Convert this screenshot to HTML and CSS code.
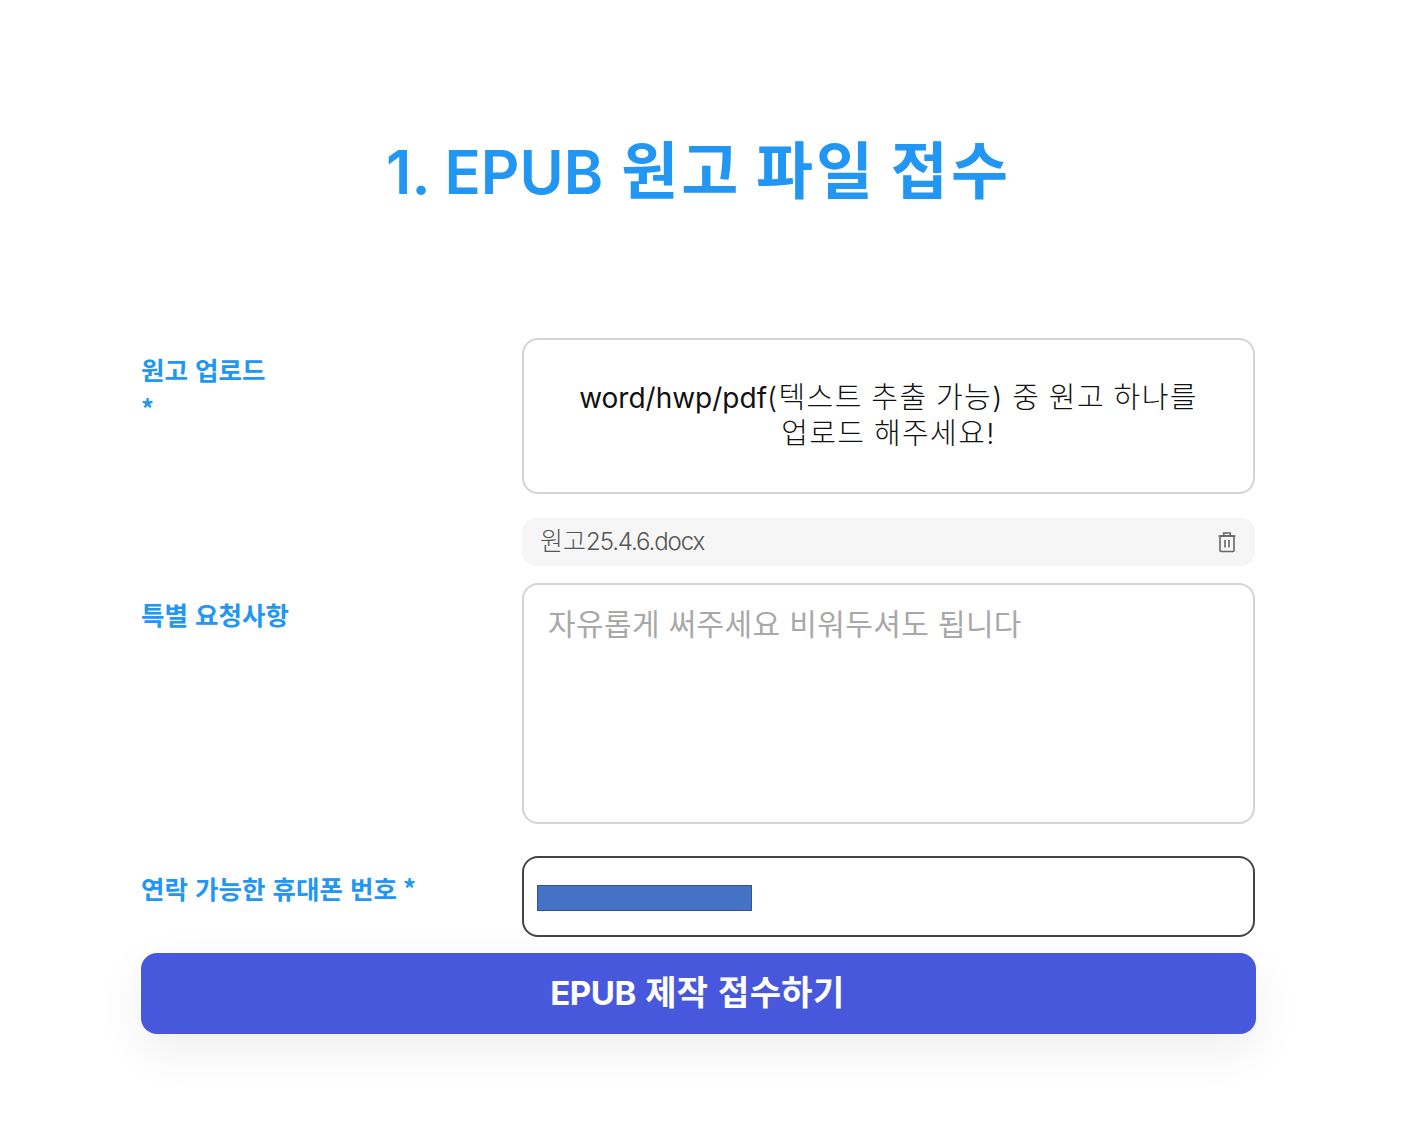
FILE: index.html
```html
<!DOCTYPE html>
<html lang="ko">

<head>
    <meta charset="UTF-8">
    <meta name="viewport" content="width=device-width, initial-scale=1.0">
    <title>EPUB 원고 파일 접수</title>
    <link rel="stylesheet" href="styles.css">
</head>

<body>
    <main class="page">
        <h1 class="page__title">1. EPUB <span class="page__title-ko">원고 파일 접수</span></h1>

        <form class="order-form">
            <div class="order-form__row order-form__row--upload">
                <label class="order-form__label">원고 업로드<span class="order-form__star order-form__star--block">*</span></label>
                <div class="order-form__field">
                    <div class="upload-box">word/hwp/pdf<span class="upload-box__ko">(텍스트 추출 가능) 중 원고 하나를<br>업로드 해주세요!</span></div>
                    <div class="file-item">
                        <span class="file-item__name"><span class="file-item__ko">원고</span>25.4.6.docx</span>
                        <svg class="file-item__icon" viewBox="0 0 20 22" fill="none" stroke="currentColor" stroke-width="1.6">
                            <path d="M1.5 5h17" />
                            <path d="M6.8 5V2h6.4v3" />
                            <rect x="3" y="5" width="14" height="15.5" rx="1.2" />
                            <path d="M8 9v7.5M12 9v7.5" />
                        </svg>
                    </div>
                </div>
            </div>

            <div class="order-form__row order-form__row--request">
                <label class="order-form__label">특별 요청사항</label>
                <div class="order-form__field">
                    <textarea class="order-form__textarea" placeholder="자유롭게 써주세요 비워두셔도 됩니다"></textarea>
                </div>
            </div>

            <div class="order-form__row order-form__row--phone">
                <label class="order-form__label">연락 가능한 휴대폰 번호<span class="order-form__star">*</span></label>
                <div class="order-form__field">
                    <div class="phone-input">
                        <span class="phone-input__mask"></span>
                    </div>
                </div>
            </div>

            <button class="order-form__submit" type="button"><span class="order-form__submit-en">EPUB</span> 제작 접수하기</button>
        </form>
    </main>
</body>

</html>
```

FILE: styles.css
```css
* {
    box-sizing: border-box;
}

body {
    margin: 0;
    background: #fff;
    font-family: "Noto Sans CJK KR", Inter, sans-serif;
}

.page {
    padding: 130px 160px 91px 141px;
    width: 1416px;
}

.page__title {
    margin: 0 0 124px;
    height: 84px;
    font-family: Inter, "Noto Sans CJK KR", sans-serif;
    font-size: 60px;
    line-height: 84px;
    font-weight: 600;
    text-align: center;
    color: #2196f3;
}

.page__title-ko {
    margin-left: 3px;
    font-size: 62px;
    font-weight: 700;
    letter-spacing: 3px;
    word-spacing: -3px;
}

/* form */
.order-form {
    width: 1115px;
}

.order-form__row {
    display: grid;
    grid-template-columns: 381px 733px;
}

.order-form__row--request {
    margin-top: 17px;
}

.order-form__row--phone {
    margin-top: 32px;
}

.order-form__label {
    padding-top: 13px;
    font-size: 25.5px;
    line-height: 36px;
    font-weight: 700;
    color: #2196f3;
}

.order-form__row--phone .order-form__label {
    padding-top: 14px;
}

.order-form__row--phone .order-form__star {
    margin-left: 6px;
}

.order-form__star--block {
    display: block;
    margin-top: 3px;
}

/* upload */
.upload-box {
    height: 156px;
    padding: 40px 20px 0;
    border: 2px solid #d4d4d4;
    border-radius: 16px;
    font-family: Inter, "Noto Sans CJK KR", sans-serif;
    font-size: 28px;
    line-height: 36px;
    text-align: center;
    color: #111;
}

.upload-box__ko {
    font-size: 29px;
    font-weight: 300;
    letter-spacing: 1.4px;
    word-spacing: -1px;
}

.file-item {
    display: flex;
    align-items: center;
    justify-content: space-between;
    height: 48px;
    margin-top: 24px;
    padding: 0 18px;
    border-radius: 14px;
    background: #f6f6f6;
}

.file-item__name {
    margin-top: -6px;
    font-family: Inter, "Noto Sans CJK KR", sans-serif;
    font-size: 24px;
    font-weight: 300;
    letter-spacing: -1.1px;
    color: #555;
}

.file-item__ko {
    font-size: 25px;
    letter-spacing: 0;
}

.file-item__icon {
    width: 20px;
    height: 22px;
    color: #666;
}

.order-form__textarea {
    display: block;
    width: 100%;
    height: 241px;
    padding: 17px 24px;
    border: 2px solid #d4d4d4;
    border-radius: 16px;
    font-family: "Noto Sans CJK KR", sans-serif;
    font-size: 30px;
    line-height: 40px;
    letter-spacing: 0.37px;
    resize: none;
    outline: none;
}

.order-form__textarea::placeholder {
    color: #a8a8a8;
}

/* phone */
.phone-input {
    display: flex;
    align-items: center;
    height: 81px;
    padding: 2px 13px 0;
    border: 2px solid #444;
    border-radius: 16px;
}

.phone-input__mask {
    width: 215px;
    height: 26px;
    border: 1px solid #2f5597;
    background: #4472c4;
}

.order-form__submit {
    display: block;
    width: 100%;
    height: 81px;
    margin-top: 16px;
    padding: 0 2px 7px 0;
    border: 0;
    border-radius: 16px;
    background: #4858dc;
    box-shadow: 0 16px 48px rgba(0, 0, 0, 0.07);
    font-family: Inter, "Noto Sans CJK KR", sans-serif;
    font-size: 34px;
    font-weight: 700;
    letter-spacing: 0.4px;
    word-spacing: 1px;
    color: #fff;
}

.order-form__submit-en {
    font-size: 33px;
    letter-spacing: -0.5px;
}
```
